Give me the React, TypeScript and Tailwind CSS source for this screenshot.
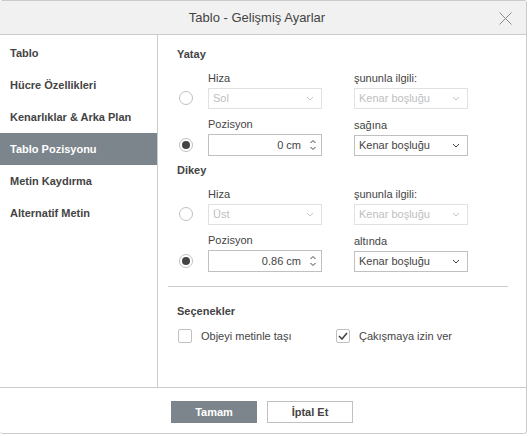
import React from 'react';

const menu = ['Tablo', 'Hücre Özellikleri', 'Kenarlıklar & Arka Plan', 'Tablo Pozisyonu', 'Metin Kaydırma', 'Alternatif Metin'];

const Chevron: React.FC<{ disabled?: boolean }> = ({ disabled }) => (
  <svg width="8" height="5" viewBox="0 0 8 5" className="shrink-0">
    <path d="M1 1l3 3 3-3" fill="none" stroke={disabled ? '#c8c8c8' : '#444'} strokeWidth="1" />
  </svg>
);

const Select: React.FC<{ value: string; disabled?: boolean }> = ({ value, disabled }) => (
  <div
    className={`flex h-[21px] w-[114px] items-center justify-between border bg-white pl-[4px] pr-[7px] ${
      disabled ? 'border-[#e1e1e1] text-[#c0c0c0]' : 'border-[#c0c0c0] text-[#444]'
    }`}
  >
    <span>{value}</span>
    <Chevron disabled={disabled} />
  </div>
);

const Spinner: React.FC<{ value: string }> = ({ value }) => (
  <div className="flex h-[22px] w-[114px] items-center justify-end border border-[#c0c0c0] bg-white pr-[4px] text-[#444]">
    <span className="mr-[8px]">{value}</span>
    <svg width="8" height="14" viewBox="0 0 8 14">
      <path d="M1.5 5l2.5-2.5 2.5 2.5" fill="none" stroke="#444" strokeWidth="1" />
      <path d="M1.5 9l2.5 2.5 2.5-2.5" fill="none" stroke="#444" strokeWidth="1" />
    </svg>
  </div>
);

const Radio: React.FC<{ checked?: boolean }> = ({ checked }) => (
  <div className="flex w-[31px] items-center">
    <div className="ml-[2px] flex h-[14px] w-[14px] items-center justify-center rounded-full border border-[#c0c0c0] bg-white">
      {checked && <div className="h-[8px] w-[8px] rounded-full bg-[#444]" />}
    </div>
  </div>
);

const Field: React.FC<{ label: string; children: React.ReactNode }> = ({ label, children }) => (
  <div className="flex flex-col">
    <div className="h-[14px] leading-[14px]">{label}</div>
    <div className="mt-[3px]">{children}</div>
  </div>
);

const Group: React.FC<{
  title: string;
  align: string;
  pos: string;
  relLabel: string;
  className?: string;
}> = ({ title, align, pos, relLabel, className }) => (
  <div className={className}>
    <div className="h-[14px] font-bold leading-[14px]">{title}</div>
    <div className="mt-[10px] flex items-end">
      <div className="mb-[4px]">
        <Radio />
      </div>
      <Field label="Hiza">
        <Select value={align} disabled />
      </Field>
      <div className="ml-[32px]">
        <Field label="şununla ilgili:">
          <Select value="Kenar boşluğu" disabled />
        </Field>
      </div>
    </div>
    <div className="mt-[8px] flex items-end">
      <div className="mb-[4px]">
        <Radio checked />
      </div>
      <Field label="Pozisyon">
        <Spinner value={pos} />
      </Field>
      <div className="ml-[32px]">
        <Field label={relLabel}>
          <Select value="Kenar boşluğu" />
        </Field>
      </div>
    </div>
  </div>
);

const Checkbox: React.FC<{ checked?: boolean; label: string }> = ({ checked, label }) => (
  <div className="flex items-center">
    <div className="flex h-[14px] w-[14px] items-center justify-center rounded-[2px] border border-[#c0c0c0] bg-white">
      {checked && (
        <svg width="10" height="8" viewBox="0 0 10 8">
          <path d="M1 4l3 3 5-6" fill="none" stroke="#444" strokeWidth="1.6" />
        </svg>
      )}
    </div>
    <span className="ml-[9px]">{label}</span>
  </div>
);

export default function App() {
  return (
    <div className="h-[436px] w-[528px] bg-white" style={{ fontFamily: '"Liberation Sans", Arial, sans-serif' }}>
      <div className="flex h-[434px] w-[527px] flex-col rounded-[3px] border-y border-r border-[#cbcbcb] text-[11px] text-[#444]">
        <div className="relative flex h-[34px] shrink-0 items-center justify-center border-b border-[#cbcbcb] bg-[#f1f1f1] pr-[12px]">
          <span className="text-[13px] text-[#444]">Tablo - Gelişmiş Ayarlar</span>
          <svg className="absolute right-[14px] top-[11px]" width="13" height="13" viewBox="0 0 13 13">
            <path d="M0.5 0.5l12 12M12.5 0.5l-12 12" stroke="#8a8a8a" strokeWidth="1" />
          </svg>
        </div>
        <div className="flex h-[352px] shrink-0">
          <div className="w-[158px] shrink-0 border-r border-[#cbcbcb] pt-[2px]">
            {menu.map((m) => (
              <div
                key={m}
                className={`flex h-[32px] items-center pl-[10px] font-bold ${
                  m === 'Tablo Pozisyonu' ? 'bg-[#7d858c] text-white' : 'text-[#444]'
                }`}
              >
                {m}
              </div>
            ))}
          </div>
          <div className="flex-1 pl-[19px] pr-[18px] pt-[12px]">
            <Group title="Yatay" align="Sol" pos="0 cm" relLabel="sağına" />
            <Group className="mt-[7px]" title="Dikey" align="Üst" pos="0.86 cm" relLabel="altında" />
            <div className="-ml-[9px] mt-[14px] border-t border-[#cbcbcb]" />
            <div className="mt-[17px] h-[14px] font-bold leading-[14px]">Seçenekler</div>
            <div className="mt-[10px] flex pl-[1px]">
              <div className="w-[158px]">
                <Checkbox label="Objeyi metinle taşı" />
              </div>
              <Checkbox checked label="Çakışmaya izin ver" />
            </div>
          </div>
        </div>
        <div className="flex flex-1 items-center justify-center gap-[10px] border-t border-[#cbcbcb] pr-[2px] pt-[3px]">
          <button className="h-[22px] w-[86px] bg-[#7d858c] font-bold text-white">Tamam</button>
          <button className="h-[22px] w-[86px] border border-[#c0c0c0] bg-white font-bold text-[#444]">İptal Et</button>
        </div>
      </div>
    </div>
  );
}
